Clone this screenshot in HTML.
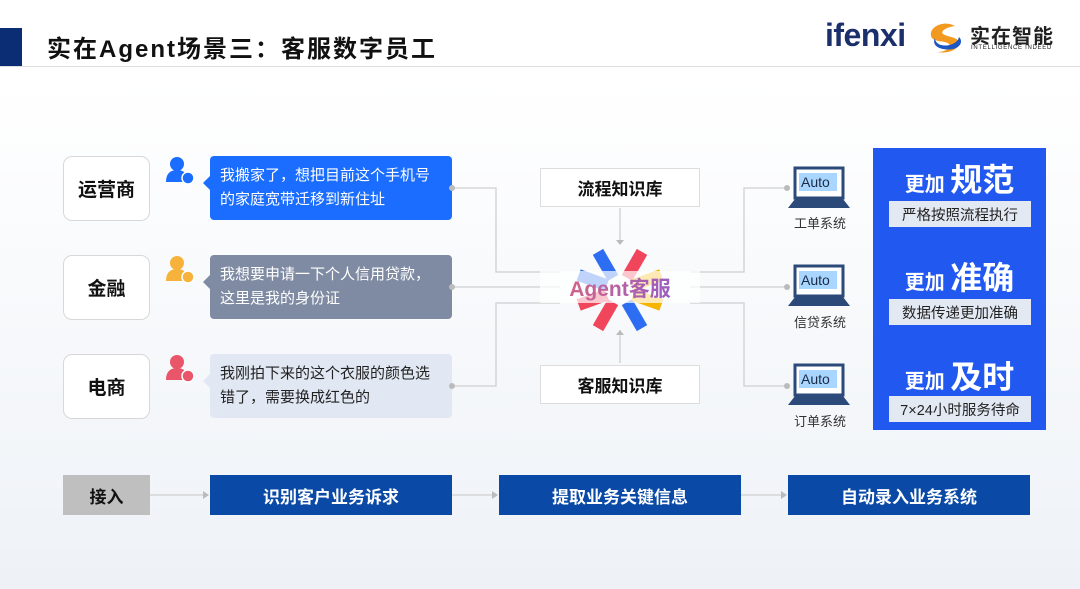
<!DOCTYPE html><html><head><meta charset="utf-8"><style>
*{margin:0;padding:0;box-sizing:border-box}
body{width:1080px;height:589px;overflow:hidden;position:relative;font-family:"Liberation Sans","Noto Sans CJK SC",sans-serif;background:linear-gradient(#fff 0,#fff 80px,#eef2f7 589px)}
.a{position:absolute}
.lb{border:1.5px solid #d8d8d8;border-radius:9px;background:#fff;font-weight:bold;font-size:19px;display:flex;align-items:center;justify-content:center;color:#111;width:87px;height:65px;left:63px}
.bub{left:210px;width:242px;height:64px;border-radius:4px;font-size:15px;line-height:24px;padding:8px 0 0 10px}
.bub:before{content:"";position:absolute;left:-7px;top:20px;border:7px solid transparent;border-left:0;border-right-color:inherit}
.kb{left:540px;width:160px;height:39px;background:#fff;border:1px solid #ddd;font-weight:bold;font-size:17px;display:flex;align-items:center;justify-content:center;color:#111}
.sys{font-size:13px;color:#333;width:70px;text-align:center}
.bt{top:475px;height:40px;display:flex;align-items:center;justify-content:center;font-weight:bold;font-size:17px;color:#fff;background:#0a4aa6;width:242px}
.rp{color:#fff;font-weight:bold;text-align:center;width:173px;left:873px}
.tag{left:889px;width:142px;height:26px;background:#e3e9f3;color:#222;font-size:14.5px;display:flex;align-items:center;justify-content:center}
</style></head><body>
<div class="a" style="left:0;top:28px;width:22px;height:38px;background:#0a2d74"></div>
<div class="a" style="left:47px;top:29px;font-size:24px;font-weight:bold;letter-spacing:2px;color:#111">实在Agent场景三：客服数字员工</div>
<div class="a" style="left:0;top:66px;width:1080px;height:1px;background:#ddd"></div>
<div class="a" style="left:825px;top:17px;font-size:32px;font-weight:bold;color:#1b2f6b;letter-spacing:-0.5px">ifenxi</div>
<svg class="a" style="left:925px;top:20px" width="40" height="36"><path d="M30 6C20 0 4 6 6 16c2 7 14 4 18 8 3 4-4 8-12 8 10 2 22-2 22-9 0-6-12-6-16-9-3-3 4-7 12-8z" fill="#f29a1f"/><path d="M10 18c-4 8 6 13 18 11 8-2 10-8 6-12-1 6-10 10-18 8-4-1-6-4-6-7z" fill="#1a56c4"/></svg>
<div class="a" style="left:970px;top:20px;font-size:20px;font-weight:bold;color:#222;letter-spacing:1px">实在智能</div>
<div class="a" style="left:971px;top:45px;font-size:6px;color:#222;letter-spacing:0.7px">INTELLIGENCE INDEED</div>

<div class="a lb" style="top:156px">运营商</div>
<div class="a lb" style="top:255px">金融</div>
<div class="a lb" style="top:354px">电商</div>

<svg class="a" style="left:164px;top:156px" width="34" height="30"><circle cx="13" cy="8" r="7" fill="#1a6dff"/><path d="M2 26c0-9 5-12 11-12s11 3 11 12z" fill="#1a6dff"/><circle cx="24" cy="22" r="6" fill="#1a6dff" stroke="#fff" stroke-width="1.5"/></svg>
<svg class="a" style="left:164px;top:255px" width="34" height="30"><circle cx="13" cy="8" r="7" fill="#f7b23b"/><path d="M2 26c0-9 5-12 11-12s11 3 11 12z" fill="#f7b23b"/><circle cx="24" cy="22" r="6" fill="#f7b23b" stroke="#fff" stroke-width="1.5"/></svg>
<svg class="a" style="left:164px;top:354px" width="34" height="30"><circle cx="13" cy="8" r="7" fill="#e9566a"/><path d="M2 26c0-9 5-12 11-12s11 3 11 12z" fill="#e9566a"/><circle cx="24" cy="22" r="6" fill="#e9566a" stroke="#fff" stroke-width="1.5"/></svg>

<div class="a bub" style="top:156px;background:#1a6dff;border-color:#1a6dff;color:#fff">我搬家了，想把目前这个手机号<br>的家庭宽带迁移到新住址</div>
<div class="a bub" style="top:255px;background:#7f8ba3;border-color:#7f8ba3;color:#fff">我想要申请一下个人信用贷款，<br>这里是我的身份证</div>
<div class="a bub" style="top:354px;background:#e1e8f3;border-color:#e1e8f3;color:#222">我刚拍下来的这个衣服的颜色选<br>错了，需要换成红色的</div>

<svg class="a" style="left:0;top:0" width="1080" height="589" fill="none" stroke="#cfcfcf" stroke-width="1.3">
<path d="M452 188H496V272H560M452 287H560M452 386H496V303H560"/>
<path d="M690 272H744V188H790M690 287H790M690 303H744V386H790"/>
<path d="M620 208V240M620 330V363"/>
<path d="M150 495H205M452 495H494M741 495H783"/>
<g fill="#bbb" stroke="none"><circle cx="452" cy="188" r="3"/><circle cx="452" cy="287" r="3"/><circle cx="452" cy="386" r="3"/><circle cx="787" cy="188" r="3"/><circle cx="787" cy="287" r="3"/><circle cx="787" cy="386" r="3"/>
<path d="M616 240h8l-4 5zM616 335h8l-4-5zM203 491v8l6-4zM492 491v8l6-4zM781 491v8l6-4z"/></g>
</svg>

<div class="a kb" style="top:168px">流程知识库</div>
<div class="a kb" style="top:365px">客服知识库</div>

<svg class="a" style="left:570px;top:245px" width="100" height="90">
<g transform="translate(50,45)">
<rect x="-6" y="-44" width="12" height="30" fill="#2c6df2" transform="rotate(-30)"/>
<rect x="-6" y="-44" width="12" height="30" fill="#f0455a" transform="rotate(30)"/>
<rect x="-6" y="-44" width="12" height="30" fill="#f5b400" transform="rotate(70)"/>
<rect x="-6" y="-44" width="12" height="30" fill="#2c6df2" transform="rotate(-70)"/>
<rect x="-6" y="-44" width="12" height="30" fill="#2c6df2" transform="rotate(150)"/>
<rect x="-6" y="-44" width="12" height="30" fill="#f0455a" transform="rotate(210)"/>
<rect x="-6" y="-44" width="12" height="30" fill="#f5b400" transform="rotate(110)"/>
<rect x="-6" y="-44" width="12" height="30" fill="#f0455a" transform="rotate(-110)"/>
</g></svg>
<div class="a" style="left:540px;top:271px;width:160px;height:32px;background:rgba(255,255,255,0.7)"></div>
<div class="a" style="left:540px;top:273px;width:160px;text-align:center;font-size:21px;font-weight:bold;color:#b464b4;background:linear-gradient(90deg,#e0667a,#8a5bd0);-webkit-background-clip:text;background-clip:text;-webkit-text-fill-color:transparent">Agent客服</div>

<svg class="a" style="left:786px;top:166px" width="68" height="46"><rect x="9" y="2" width="48" height="30" fill="#fff" stroke="#2b4a7a" stroke-width="3"/><rect x="13" y="7" width="38" height="18" fill="#a9d6ff"/><text x="15" y="21" font-family="Liberation Sans" font-size="14" fill="#1a2a44">Auto</text><path d="M2 42L9 33H57L64 42Z" fill="#2b4a7a"/></svg>
<svg class="a" style="left:786px;top:264px" width="68" height="46"><rect x="9" y="2" width="48" height="30" fill="#fff" stroke="#2b4a7a" stroke-width="3"/><rect x="13" y="7" width="38" height="18" fill="#a9d6ff"/><text x="15" y="21" font-family="Liberation Sans" font-size="14" fill="#1a2a44">Auto</text><path d="M2 42L9 33H57L64 42Z" fill="#2b4a7a"/></svg>
<svg class="a" style="left:786px;top:363px" width="68" height="46"><rect x="9" y="2" width="48" height="30" fill="#fff" stroke="#2b4a7a" stroke-width="3"/><rect x="13" y="7" width="38" height="18" fill="#a9d6ff"/><text x="15" y="21" font-family="Liberation Sans" font-size="14" fill="#1a2a44">Auto</text><path d="M2 42L9 33H57L64 42Z" fill="#2b4a7a"/></svg>
<div class="a sys" style="left:785px;top:213px">工单系统</div>
<div class="a sys" style="left:785px;top:312px">信贷系统</div>
<div class="a sys" style="left:785px;top:411px">订单系统</div>

<div class="a" style="left:873px;top:148px;width:173px;height:282px;background:#2159f0"></div>
<div class="a rp" style="top:155px"><span style="font-size:20px">更加 </span><span style="font-size:32px">规范</span></div>
<div class="a tag" style="top:201px">严格按照流程执行</div>
<div class="a rp" style="top:253px"><span style="font-size:20px">更加 </span><span style="font-size:32px">准确</span></div>
<div class="a tag" style="top:299px">数据传递更加准确</div>
<div class="a rp" style="top:352px"><span style="font-size:20px">更加 </span><span style="font-size:32px">及时</span></div>
<div class="a tag" style="top:396px">7×24小时服务待命</div>

<div class="a bt" style="left:63px;width:87px;background:#bfbfbf;color:#111">接入</div>
<div class="a bt" style="left:210px">识别客户业务诉求</div>
<div class="a bt" style="left:499px">提取业务关键信息</div>
<div class="a bt" style="left:788px">自动录入业务系统</div>
</body></html>
